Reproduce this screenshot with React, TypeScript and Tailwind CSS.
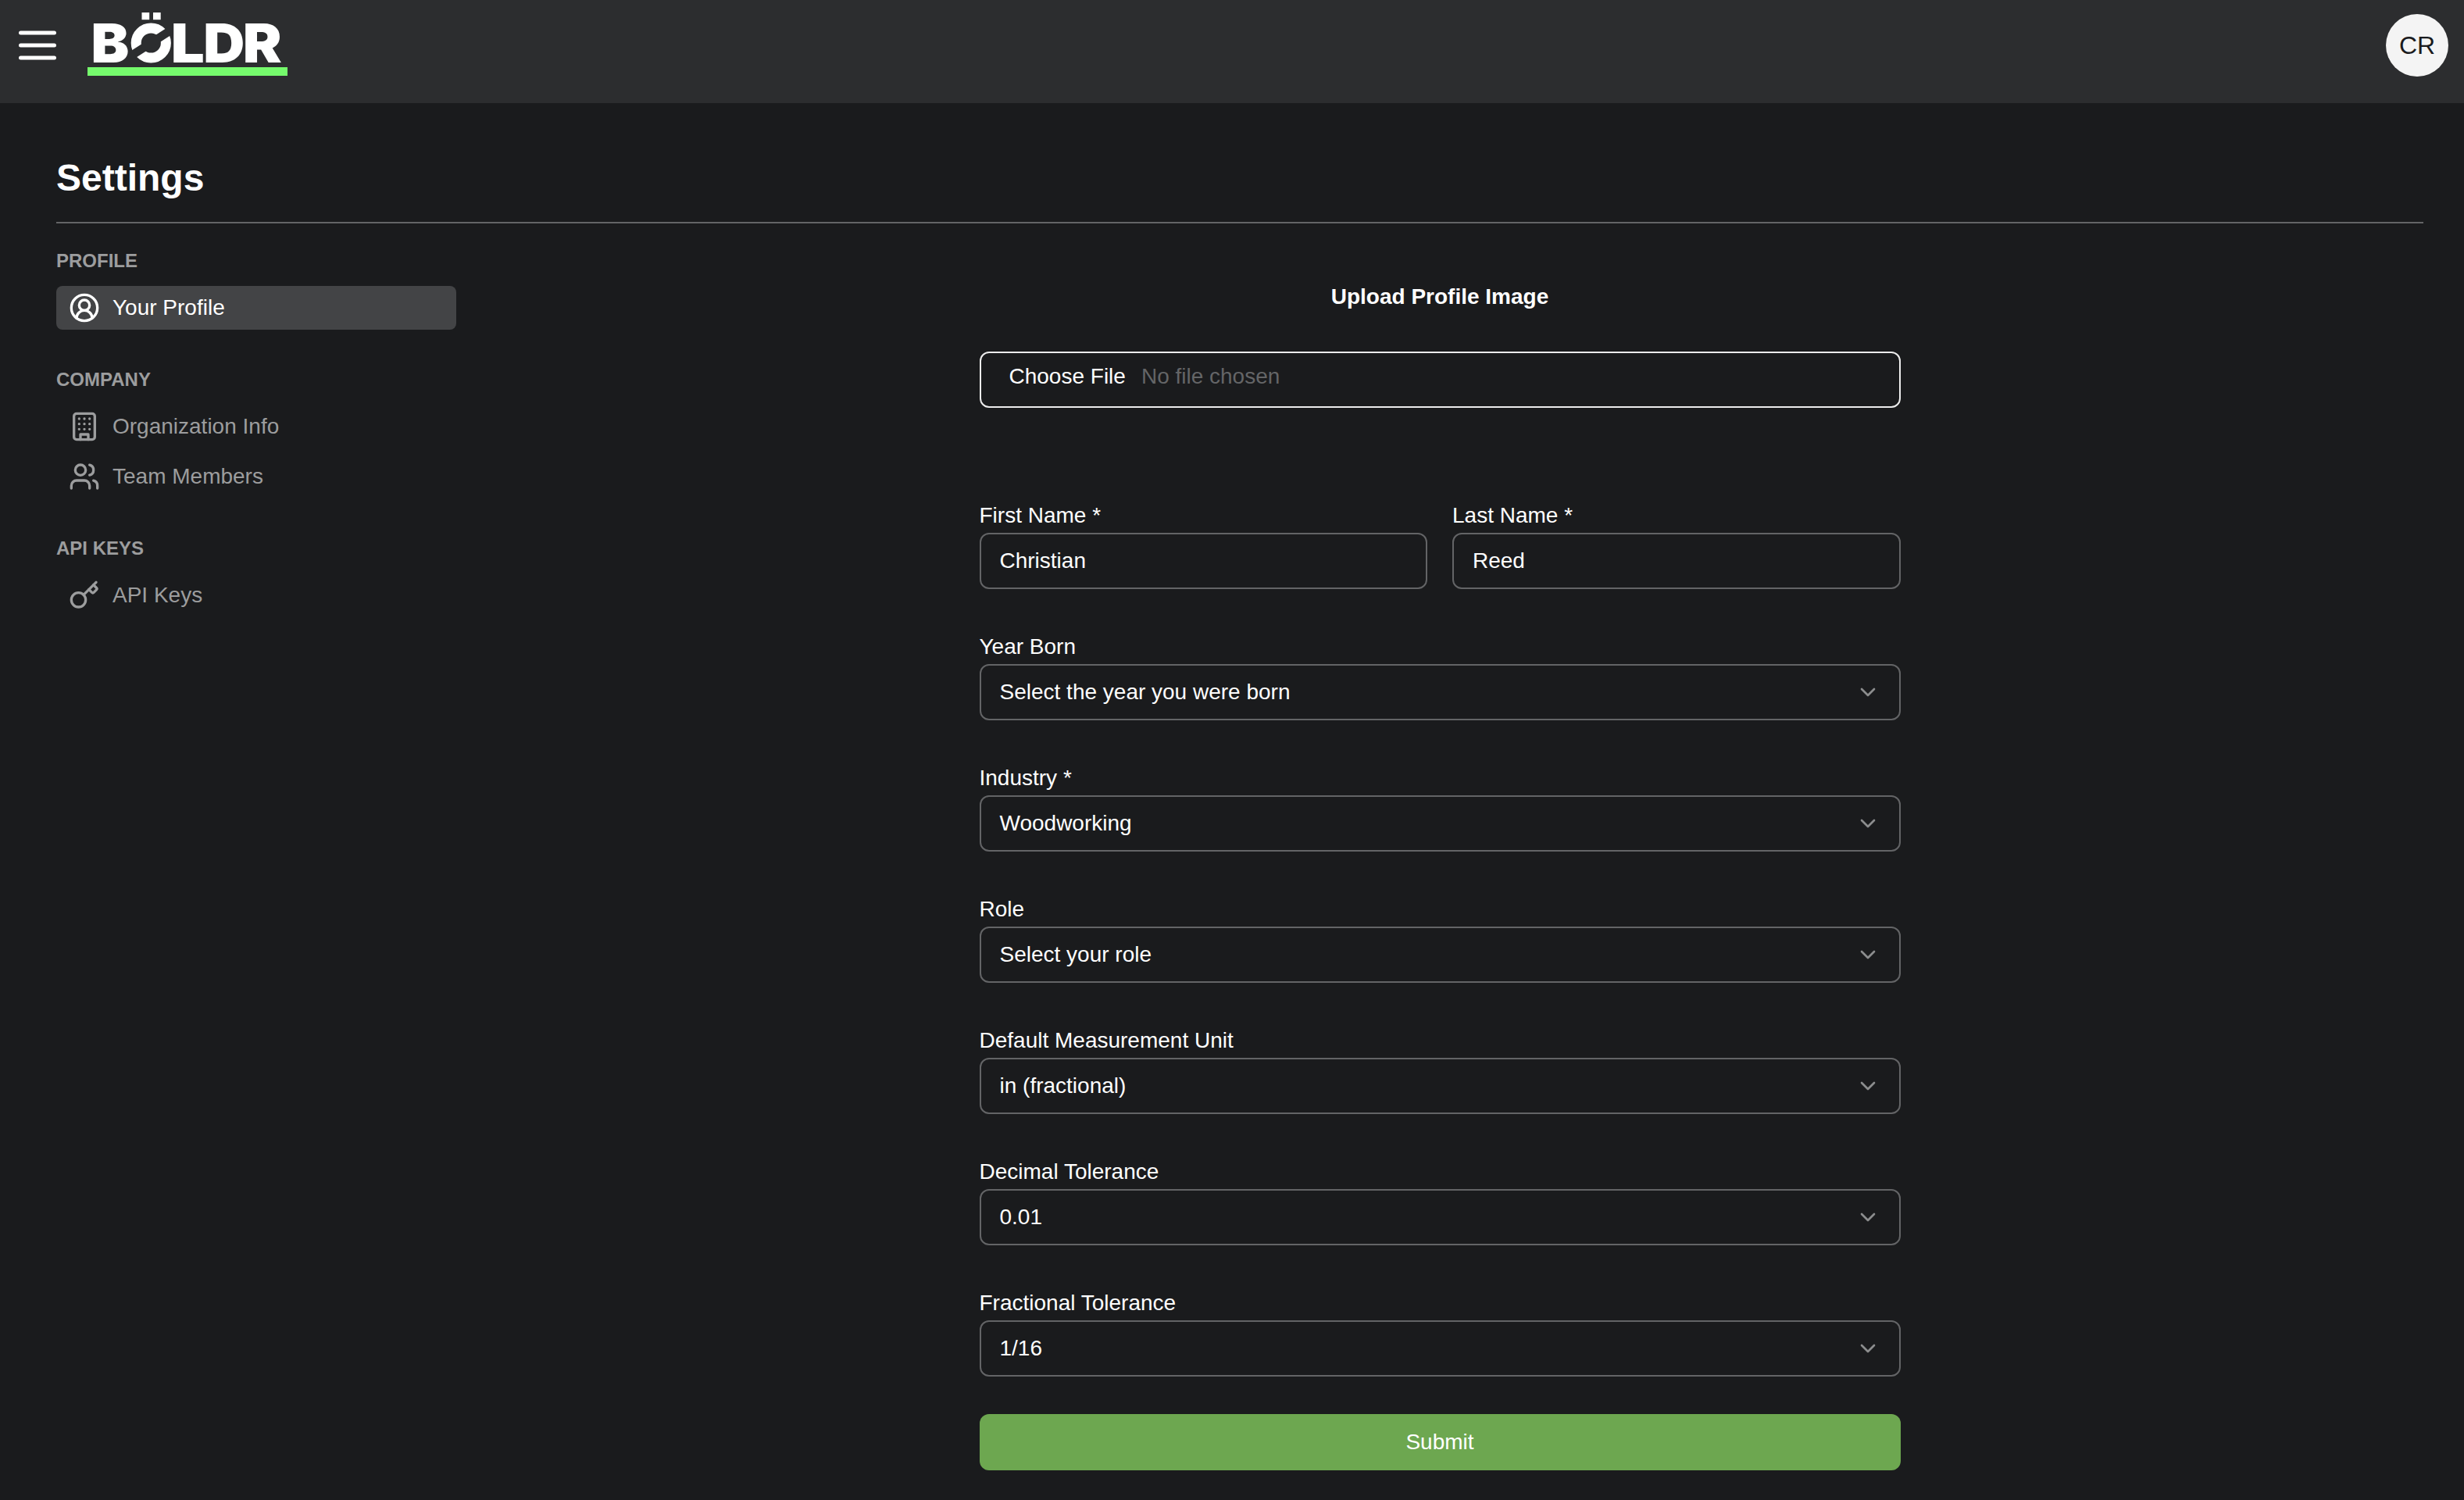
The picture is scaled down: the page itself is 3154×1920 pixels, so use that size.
import type { ReactNode } from "react";
import { ChevronDown, CircleUserRound, Key, Users } from "lucide-react";

function Logo() {
  return (
    <svg width="256" height="97" viewBox="112 0 256 97" role="img" aria-label="BÖLDR">
      <circle cx="193.3" cy="55" r="19.1" fill="none" stroke="#fff" strokeWidth="13" />
      <path d="M163 74.6 223.6 35.4" stroke="#2c2d2f" strokeWidth="10.7" />
      <rect x="181.5" y="16" width="9.7" height="9.2" fill="#fff" />
      <rect x="196" y="16" width="9.7" height="9.2" fill="#fff" />
      <g fill="#fff" fontFamily="Inter, sans-serif" fontWeight="900" fontSize="68.8">
        <text x="116.6" y="80" textLength="48.8" lengthAdjust="spacingAndGlyphs">B</text>
        <text x="218.7" y="80" textLength="43" lengthAdjust="spacingAndGlyphs">L</text>
        <text x="260.2" y="80" textLength="53" lengthAdjust="spacingAndGlyphs">D</text>
        <text x="310.7" y="80" textLength="50" lengthAdjust="spacingAndGlyphs">R</text>
      </g>
      <rect x="112" y="86" width="256" height="11" fill="#75fa6c" />
    </svg>
  );
}

function BuildingIcon() {
  return (
    <svg width="40" height="40" viewBox="0 0 24 24" fill="none" stroke="currentColor" strokeWidth="2" strokeLinecap="round" strokeLinejoin="round">
      <rect width="16" height="20" x="4" y="2" rx="2" />
      <path d="M9 22v-4h6v4M8 6h.01M16 6h.01M12 6h.01M12 10h.01M12 14h.01M16 10h.01M16 14h.01M8 10h.01M8 14h.01" />
    </svg>
  );
}

function Header() {
  return (
    <header className="flex h-[132px] items-start justify-between bg-[#2c2d2f] pl-6 pr-5">
      <div className="flex items-start gap-10">
        <button aria-label="Menu" className="mt-[39px]">
          <svg width="48" height="38" viewBox="0 0 48 38" stroke="#fff" strokeWidth="5" strokeLinecap="round">
            <path d="M2.5 3h43M2.5 19h43M2.5 35h43" />
          </svg>
        </button>
        <Logo />
      </div>
      <div className="mt-[18px] flex size-20 items-center justify-center rounded-full bg-[#f4f4f4] text-[32px] leading-10 text-[#1a1b1d]">
        CR
      </div>
    </header>
  );
}

function NavSection({ title, children }: { title: string; children: ReactNode }) {
  return (
    <section>
      <h2 className="mb-4 pb-px text-2xl leading-[31px] font-bold text-[#9c9d9e]">{title}</h2>
      <div className="flex flex-col gap-2">{children}</div>
    </section>
  );
}

function NavItem({ icon, label, active }: { icon: ReactNode; label: string; active?: boolean }) {
  return (
    <a className={`flex h-14 items-center gap-4 rounded-lg px-4 ${active ? "bg-[#434446] text-white" : "text-[#9c9d9e]"}`}>
      {icon}
      <span className="pb-px">{label}</span>
    </a>
  );
}

function Field({ label, value, select }: { label: string; value: string; select?: boolean }) {
  return (
    <div className="flex flex-1 flex-col">
      <label className="mb-[3px]">{label}</label>
      <div className="flex h-[72px] items-center justify-between rounded-xl border-2 border-[#636466] px-6">
        <span className="pb-px">{value}</span>
        {select && <ChevronDown size={32} className="text-[#8c8d8e]" />}
      </div>
    </div>
  );
}

const selects = [
  { label: "Year Born", value: "Select the year you were born" },
  { label: "Industry *", value: "Woodworking" },
  { label: "Role", value: "Select your role" },
  { label: "Default Measurement Unit", value: "in (fractional)" },
  { label: "Decimal Tolerance", value: "0.01" },
  { label: "Fractional Tolerance", value: "1/16" },
];

export default function App() {
  return (
    <div className="h-[1920px] overflow-hidden bg-[#1a1b1d] font-['Liberation_Sans',Arial,sans-serif] text-[28px] leading-[39px] text-white">
      <Header />
      <main className="pt-16 pr-[52px] pl-[72px]">
        <h1 className="pb-px text-5xl leading-[63px] font-bold">Settings</h1>
        <hr className="mt-6 border-t-2 border-[#636466]" />
        <div className="flex">
          <nav className="flex w-[512px] flex-col gap-12 pt-8">
            <NavSection title="PROFILE">
              <NavItem icon={<CircleUserRound size={40} />} label="Your Profile" active />
            </NavSection>
            <NavSection title="COMPANY">
              <NavItem icon={<BuildingIcon />} label="Organization Info" />
              <NavItem icon={<Users size={40} />} label="Team Members" />
            </NavSection>
            <NavSection title="API KEYS">
              <NavItem icon={<Key size={40} />} label="API Keys" />
            </NavSection>
          </nav>
          <form className="flex flex-1 flex-col items-center pt-[74px]">
            <h3 className="font-bold">Upload Profile Image</h3>
            <div className="mt-[51px] flex h-[72px] w-[1179px] items-start gap-5 rounded-xl border-2 border-[#ececec] pt-2.5 pl-9">
              <span>Choose File</span>
              <span className="text-[#646567]">No file chosen</span>
            </div>
            <div className="mt-[118px] flex w-[1179px] flex-col gap-[54px]">
              <div className="flex gap-8">
                <Field label="First Name *" value="Christian" />
                <Field label="Last Name *" value="Reed" />
              </div>
              {selects.map((s) => (
                <Field key={s.label} label={s.label} value={s.value} select />
              ))}
            </div>
            <button type="button" className="mt-12 h-[72px] w-[1179px] rounded-xl bg-[#6da750] pb-px">
              Submit
            </button>
          </form>
        </div>
      </main>
    </div>
  );
}
